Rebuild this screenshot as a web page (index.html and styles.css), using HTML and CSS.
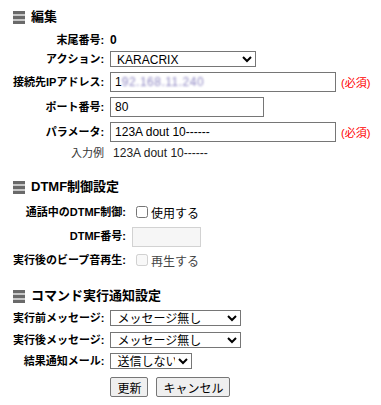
FILE: index.html
```html
<!DOCTYPE html>
<html lang="ja">
<head>
  <meta charset="UTF-8" />
  <title>編集</title>
  <link rel="stylesheet" href="styles.css">
</head>
<body>

  <div class="page">

    <!-- 編集 -->
    <h3 class="sec-title">
      <svg class="sec-icon" width="12" height="13" viewBox="0 0 12 13">
        <rect x="0" y="0" width="12" height="13" fill="#c8c8c8"/>
        <rect x="0" y="0" width="12" height="3" fill="#6a6a6a"/>
        <rect x="0" y="5" width="12" height="3" fill="#6a6a6a"/>
        <rect x="0" y="10" width="12" height="3" fill="#6a6a6a"/>
      </svg>
      編集
    </h3>
    <table class="form-table">
      <tr class="row-text">
        <th>末尾番号:</th>
        <td><b>0</b></td>
        <td></td>
      </tr>
      <tr class="row-select">
        <th>アクション:</th>
        <td>
          <select class="sel-action">
            <option>KARACRIX</option>
          </select>
        </td>
        <td></td>
      </tr>
      <tr class="row-input">
        <th>接続先IPアドレス:</th>
        <td><div class="text-box wide">1<span class="masked">92.168.11.240</span></div></td>
        <td class="required">(必須)</td>
      </tr>
      <tr class="row-input">
        <th>ポート番号:</th>
        <td><input type="text" class="text-box mid" value="80"></td>
        <td></td>
      </tr>
      <tr class="row-input">
        <th>パラメータ:</th>
        <td><input type="text" class="text-box wide" value="123A dout 10------"></td>
        <td class="required">(必須)</td>
      </tr>
      <tr class="row-text">
        <th class="plain">入力例</th>
        <td class="example">123A dout 10------</td>
        <td></td>
      </tr>
    </table>

    <!-- DTMF制御設定 -->
    <h3 class="sec-title gap-top">
      <svg class="sec-icon" width="12" height="13" viewBox="0 0 12 13">
        <rect x="0" y="0" width="12" height="13" fill="#c8c8c8"/>
        <rect x="0" y="0" width="12" height="3" fill="#6a6a6a"/>
        <rect x="0" y="5" width="12" height="3" fill="#6a6a6a"/>
        <rect x="0" y="10" width="12" height="3" fill="#6a6a6a"/>
      </svg>
      DTMF制御設定
    </h3>
    <table class="form-table dtmf">
      <tr class="row-check">
        <th>通話中のDTMF制御:</th>
        <td><label class="check"><input type="checkbox"> 使用する</label></td>
      </tr>
      <tr class="row-check">
        <th>DTMF番号:</th>
        <td><input type="text" class="text-box short" disabled></td>
      </tr>
      <tr class="row-check">
        <th>実行後のビープ音再生:</th>
        <td><label class="check off"><input type="checkbox" disabled> 再生する</label></td>
      </tr>
    </table>

    <!-- コマンド実行通知設定 -->
    <h3 class="sec-title gap-top2">
      <svg class="sec-icon" width="12" height="13" viewBox="0 0 12 13">
        <rect x="0" y="0" width="12" height="13" fill="#c8c8c8"/>
        <rect x="0" y="0" width="12" height="3" fill="#6a6a6a"/>
        <rect x="0" y="5" width="12" height="3" fill="#6a6a6a"/>
        <rect x="0" y="10" width="12" height="3" fill="#6a6a6a"/>
      </svg>
      コマンド実行通知設定
    </h3>
    <table class="form-table notify">
      <tr class="row-msg">
        <th>実行前メッセージ:</th>
        <td>
          <select class="sel-msg">
            <option>メッセージ無し</option>
          </select>
        </td>
      </tr>
      <tr class="row-msg">
        <th>実行後メッセージ:</th>
        <td>
          <select class="sel-msg">
            <option>メッセージ無し</option>
          </select>
        </td>
      </tr>
      <tr class="row-mail">
        <th>結果通知メール:</th>
        <td>
          <select class="sel-mail">
            <option>送信しない</option>
          </select>
        </td>
      </tr>
      <tr class="row-buttons">
        <th></th>
        <td>
          <div class="buttons">
            <button class="btn">更新</button>
            <button class="btn">キャンセル</button>
          </div>
        </td>
      </tr>
    </table>

  </div>

</body>
</html>
```

FILE: styles.css
```css
/* Base */
body {
  margin: 0;
  background: #fff;
  color: #000;
  font-family: "Liberation Sans", "Noto Sans CJK JP", sans-serif;
  font-size: 11px;
}

.page {
  padding: 7px 10px;
}

/* Section headings */
.sec-title {
  margin: 0;
  padding-left: 3px;
  height: 20px;
  line-height: 20px;
  font-size: 13px;
  font-weight: bold;
  display: flex;
  align-items: center;
  gap: 6px;
}
.sec-icon {
  display: block;
  flex: none;
}
.gap-top {
  margin-top: 15px;
}
.gap-top2 {
  margin-top: 14px;
}

/* Form tables */
.form-table {
  border-collapse: collapse;
  margin-top: 4px;
}
.form-table.dtmf {
  margin-top: 3px;
}
.form-table.notify {
  margin-top: 1px;
}
.form-table th {
  text-align: right;
  font-weight: bold;
  white-space: nowrap;
  padding: 0 3px;
  line-height: 14px;
}
.form-table th.plain {
  font-weight: normal;
  color: #333;
}
.form-table td {
  padding: 0 3px;
  white-space: nowrap;
  vertical-align: middle;
}

.row-text th,
.row-text td {
  height: 18px;
}
.row-select th,
.row-select td {
  height: 20px;
}
.row-input th,
.row-input td {
  height: 25px;
}
.row-check th,
.row-check td {
  height: 24px;
}
.row-msg th,
.row-msg td {
  height: 22px;
}
.row-mail th,
.row-mail td {
  height: 20px;
}
.row-buttons td {
  padding-top: 6px;
}

.row-text b {
  font-size: 12px;
}
.example {
  font-size: 12px;
  color: #222;
  padding-left: 6px !important;
}

/* Inputs */
.text-box {
  box-sizing: border-box;
  height: 20px;
  border: 1px solid #767676;
  border-radius: 0;
  padding: 0 4px;
  font-family: "Liberation Sans", "Noto Sans CJK JP", sans-serif;
  font-size: 12px;
  line-height: 18px;
  color: #000;
  background: #fff;
  display: block;
  margin: 1px 0 0;
}
.text-box.wide {
  width: 226px;
}
.text-box.mid {
  width: 154px;
}
.text-box.short {
  width: 69px;
  border-color: #d2d2d2;
  background: #f6f6f6;
}
.masked {
  color: #8f88c4;
  filter: blur(1.3px);
  letter-spacing: 0.5px;
}

.required {
  color: #f00;
  font-size: 11px;
  padding-left: 2px !important;
}

/* Selects */
select {
  box-sizing: border-box;
  height: 16px;
  border: 1px solid #767676;
  border-radius: 0;
  padding: 0 0 0 2px;
  font-family: "Liberation Sans", "Noto Sans CJK JP", sans-serif;
  font-size: 12px;
  color: #000;
  background-color: #fff;
  display: block;
}
.sel-action {
  width: 146px;
}
.sel-msg {
  width: 131px;
}
.sel-mail {
  width: 82px;
}

/* Checkboxes */
.check {
  display: flex;
  align-items: center;
  font-size: 12px;
}
.check input {
  width: 12px;
  height: 12px;
  margin: 0 3px 0 4px;
}
.check.off {
  color: #444;
}

/* Buttons */
.buttons {
  display: flex;
  gap: 8px;
}
.btn {
  height: 20px;
  padding: 0 6px;
  margin: 0;
  border: 1px solid #767676;
  border-radius: 2px;
  background: #efefef;
  font-family: "Liberation Sans", "Noto Sans CJK JP", sans-serif;
  font-size: 12px;
  color: #000;
}
```
